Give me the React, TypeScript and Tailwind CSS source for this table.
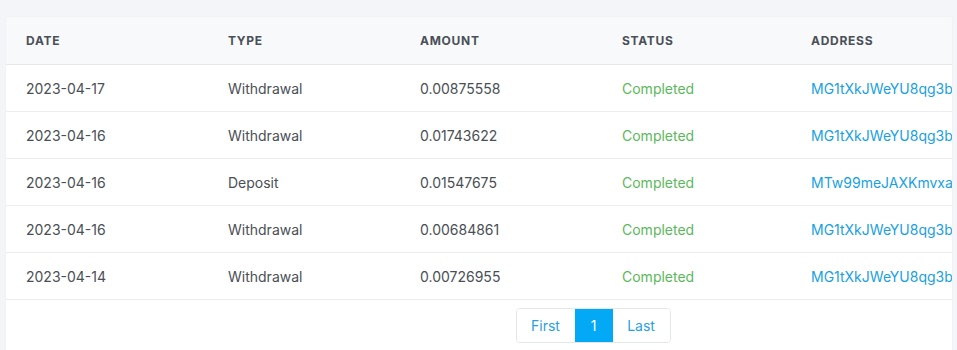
import React from 'react';

type Tx = {
  date: string;
  type: string;
  amount: string;
  status: string;
  address: string;
};

const rows: Tx[] = [
  { date: '2023-04-17', type: 'Withdrawal', amount: '0.00875558', status: 'Completed', address: 'MG1tXkJWeYU8qg3bLnS7v2wQpRkZ4cHx9T' },
  { date: '2023-04-16', type: 'Withdrawal', amount: '0.01743622', status: 'Completed', address: 'MG1tXkJWeYU8qg3bLnS7v2wQpRkZ4cHx9T' },
  { date: '2023-04-16', type: 'Deposit', amount: '0.01547675', status: 'Completed', address: 'MTw99meJAXKmvxapQ3hG8rLs2NdYc6VbWe' },
  { date: '2023-04-16', type: 'Withdrawal', amount: '0.00684861', status: 'Completed', address: 'MG1tXkJWeYU8qg3bLnS7v2wQpRkZ4cHx9T' },
  { date: '2023-04-14', type: 'Withdrawal', amount: '0.00726955', status: 'Completed', address: 'MG1tXkJWeYU8qg3bLnS7v2wQpRkZ4cHx9T' },
];

const cols = 'grid grid-cols-[202px_192px_202px_189px_1fr]';

const App = () => {
  return (
    <div className="min-h-[350px] bg-[#f4f5f8] pt-[17px] pl-[6px] pr-[5px] font-['Inter','Liberation_Sans',sans-serif]">
      <div className="bg-white rounded-t-[3px] overflow-hidden shadow-[0_0_2px_rgba(0,0,0,0.06)] h-[340px]">
        <div className="w-[1174px]">
          {/* Header */}
          <div className={`${cols} h-[48px] items-center bg-[#f8f9fb] border-b border-[#e6e8eb]`}>
            {['Date', 'Type', 'Amount', 'Status', 'Address'].map((h) => (
              <div key={h} className="pl-5 text-[12px] font-bold uppercase tracking-[0.06em] text-[#4a5058]">
                {h}
              </div>
            ))}
          </div>

          {/* Rows */}
          {rows.map((r, i) => (
            <div key={i} className={`${cols} h-[47px] items-center border-b border-[#ebedf0] text-[14px] text-[#4a4f55] whitespace-nowrap`}>
              <div className="pl-5">{r.date}</div>
              <div className="pl-5">{r.type}</div>
              <div className="pl-5">{r.amount}</div>
              <div className="pl-5 text-[#5cb85c]">{r.status}</div>
              <div className="pl-5 text-[#1a9fe0]">{r.address}</div>
            </div>
          ))}

          {/* Pagination */}
          <div className="flex justify-center pt-[8px]">
            <div className="flex h-[35px] rounded-[4px] border border-[#e3e6ea] text-[14px] overflow-hidden">
              <button className="w-[58px] text-[#2a9fe0] bg-white">First</button>
              <button className="w-[38px] text-white bg-[#03a9f4]">1</button>
              <button className="w-[57px] text-[#2a9fe0] bg-white">Last</button>
            </div>
          </div>
        </div>
      </div>
    </div>
  );
};

export default App;
